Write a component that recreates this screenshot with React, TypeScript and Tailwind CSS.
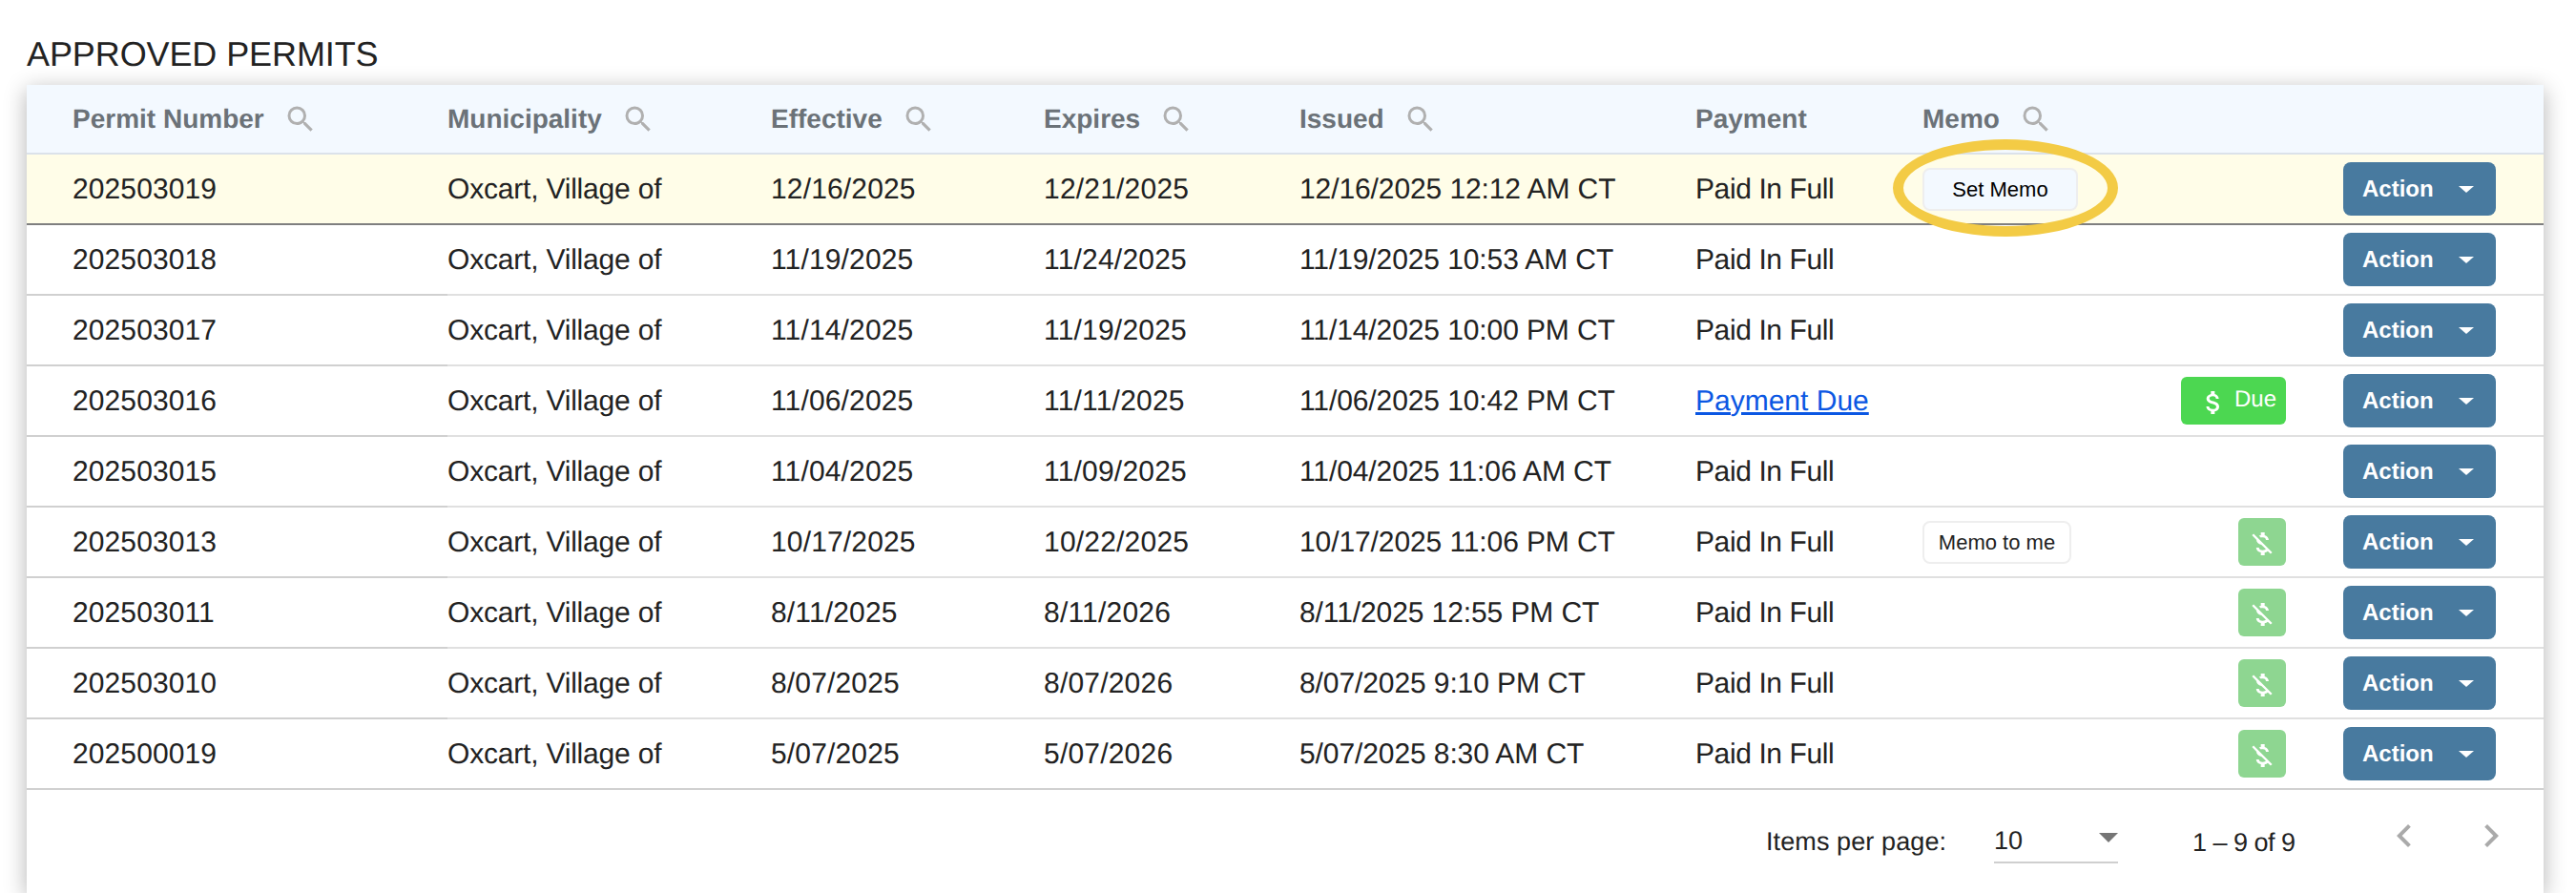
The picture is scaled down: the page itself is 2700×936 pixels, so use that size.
import React from "react";
import { MdAttachMoney, MdChevronLeft, MdChevronRight, MdMoneyOff, MdSearch } from "react-icons/md";

type Row = {
  id: string;
  effective: string;
  expires: string;
  issued: string;
  payment?: string;
  memo?: string;
  badge?: "due" | "off";
};

const rows: Row[] = [
  { id: "202503019", effective: "12/16/2025", expires: "12/21/2025", issued: "12/16/2025 12:12 AM CT", memo: "set" },
  { id: "202503018", effective: "11/19/2025", expires: "11/24/2025", issued: "11/19/2025 10:53 AM CT" },
  { id: "202503017", effective: "11/14/2025", expires: "11/19/2025", issued: "11/14/2025 10:00 PM CT" },
  { id: "202503016", effective: "11/06/2025", expires: "11/11/2025", issued: "11/06/2025 10:42 PM CT", payment: "due", badge: "due" },
  { id: "202503015", effective: "11/04/2025", expires: "11/09/2025", issued: "11/04/2025 11:06 AM CT" },
  { id: "202503013", effective: "10/17/2025", expires: "10/22/2025", issued: "10/17/2025 11:06 PM CT", memo: "me", badge: "off" },
  { id: "202503011", effective: "8/11/2025", expires: "8/11/2026", issued: "8/11/2025 12:55 PM CT", badge: "off" },
  { id: "202503010", effective: "8/07/2025", expires: "8/07/2026", issued: "8/07/2025 9:10 PM CT", badge: "off" },
  { id: "202500019", effective: "5/07/2025", expires: "5/07/2026", issued: "5/07/2025 8:30 AM CT", badge: "off" },
];

const HeadCell = ({ label, search = true, first = false }: { label: string; search?: boolean; first?: boolean }) => (
  <th className={`border-b-2 border-[#dbe2ea] p-0 text-left ${first ? "pl-12" : ""}`}>
    <div className="flex items-center">
      <span className="text-[28px] font-bold text-[#6b7278]">{label}</span>
      {search && <MdSearch size={36} className="ml-5 text-[#b0b0b0]" />}
    </div>
  </th>
);

const ActionButton = () => (
  <button
    type="button"
    className="flex h-14 w-[160px] items-center rounded-lg bg-[#487a9f] pl-5 text-2xl font-bold text-white"
  >
    Action
    <span className="ml-[26px] h-0 w-0 border-x-[8px] border-t-[7px] border-x-transparent border-t-white" />
  </button>
);

const App = () => {
  return (
    <div className="flex h-[936px] w-[2700px] flex-col overflow-hidden bg-white pl-7 pr-[34px] font-['Liberation_Sans',Arial,sans-serif] text-[#222222] antialiased [text-rendering:geometricPrecision]">
      <h1 className="pt-9 text-4xl leading-[42px] font-normal tracking-[-0.1px]">APPROVED PERMITS</h1>
      <div className="mt-[11px] flex-1 bg-white shadow-[0_5px_22px_rgba(0,0,0,0.3)]">
        <table className="w-full table-fixed border-separate border-spacing-0 text-[30px]">
          <colgroup>
            <col className="w-[441px]" />
            <col className="w-[339px]" />
            <col className="w-[286px]" />
            <col className="w-[268px]" />
            <col className="w-[415px]" />
            <col className="w-[238px]" />
            <col className="w-[255px]" />
            <col className="w-[126px]" />
            <col className="w-[270px]" />
          </colgroup>
          <thead>
            <tr className="h-[73px] bg-[#f3f9ff]">
              <HeadCell label="Permit Number" first />
              <HeadCell label="Municipality" />
              <HeadCell label="Effective" />
              <HeadCell label="Expires" />
              <HeadCell label="Issued" />
              <HeadCell label="Payment" search={false} />
              <HeadCell label="Memo" />
              <th className="border-b-2 border-[#dbe2ea]" />
              <th className="border-b-2 border-[#dbe2ea]" />
            </tr>
          </thead>
          <tbody>
            {rows.map((row, i) => {
              const border = i === 0 ? "border-[#7f7f7f]" : i === rows.length - 1 ? "border-[#d0d0d0]" : "border-[#e0e0e0]";
              const firstBorder = i === 0 ? "border-[#7f7f7f]" : "border-[#d0d0d0]";
              const cell = `h-[74px] border-b-2 p-0 ${border}`;
              return (
                <tr key={row.id} className={i === 0 ? "bg-[#fffde8]" : ""}>
                  <td className={`h-[74px] border-b-2 p-0 pl-12 tracking-[0.1px] ${firstBorder}`}>{row.id}</td>
                  <td className={`${cell} tracking-[-0.2px]`}>Oxcart, Village of</td>
                  <td className={`${cell} tracking-[0.15px]`}>{row.effective}</td>
                  <td className={`${cell} tracking-[0.2px]`}>{row.expires}</td>
                  <td className={`${cell} tracking-[-0.1px]`}>{row.issued}</td>
                  <td className={cell}>
                    {row.payment === "due" ? (
                      <a className="text-[#0b57e3] underline">Payment Due</a>
                    ) : (
                      <span className="tracking-[-0.4px]">Paid In Full</span>
                    )}
                  </td>
                  <td className={cell}>
                    {row.memo === "set" && (
                      <button
                        type="button"
                        className="relative block h-[45px] w-[163px] rounded-lg border-2 border-[#eeeeee] bg-[#f3f9ff] text-[22px] text-black"
                      >
                        Set Memo
                        <span className="pointer-events-none absolute -top-[32px] -right-[44px] -bottom-[29px] -left-[33px] rounded-[50%] border-[11px] border-[#f3cb45]" />
                      </button>
                    )}
                    {row.memo === "me" && (
                      <button
                        type="button"
                        className="block h-[45px] w-[156px] rounded-lg border-2 border-[#eeeeee] bg-white text-[22px] text-[#222222]"
                      >
                        Memo to me
                      </button>
                    )}
                  </td>
                  <td className={cell}>
                    <div className="flex justify-end">
                      {row.badge === "due" && (
                        <div className="flex h-[50px] w-[110px] items-center rounded-md bg-[#4cd751] pl-[18px] text-2xl text-white">
                          <MdAttachMoney size={32} className="mt-1" />
                          <span className="ml-[6px] -mt-[3px]">Due</span>
                        </div>
                      )}
                      {row.badge === "off" && (
                        <div className="flex h-[50px] w-[50px] items-center justify-center rounded-md bg-[#8ed691] text-white">
                          <MdMoneyOff size={32} className="mt-1" />
                        </div>
                      )}
                    </div>
                  </td>
                  <td className={`${cell} pl-[60px]`}>
                    <ActionButton />
                  </td>
                </tr>
              );
            })}
          </tbody>
        </table>
        <div className="flex h-[108px] items-center pr-[37px] pl-[1823px] text-[27px]">
          <span className="w-[239px] shrink-0 tracking-[0.1px]">Items per page:</span>
          <div className="relative flex h-[45px] w-[130px] shrink-0 items-center border-b-2 border-[#cfcfcf]">
            10
            <span className="absolute top-[13px] right-0 h-0 w-0 border-x-[10px] border-t-[10px] border-x-transparent border-t-[#757575]" />
          </div>
          <span className="ml-[78px] mt-[2px] w-[134px] shrink-0 whitespace-nowrap tracking-[-0.5px]">1 – 9 of 9</span>
          <div className="-mt-[12px] flex shrink-0 text-[#aaaaaa]">
            <MdChevronLeft size={48} className="ml-[64px]" />
            <MdChevronRight size={48} className="ml-[43px]" />
          </div>
        </div>
      </div>
    </div>
  );
};

export default App;
